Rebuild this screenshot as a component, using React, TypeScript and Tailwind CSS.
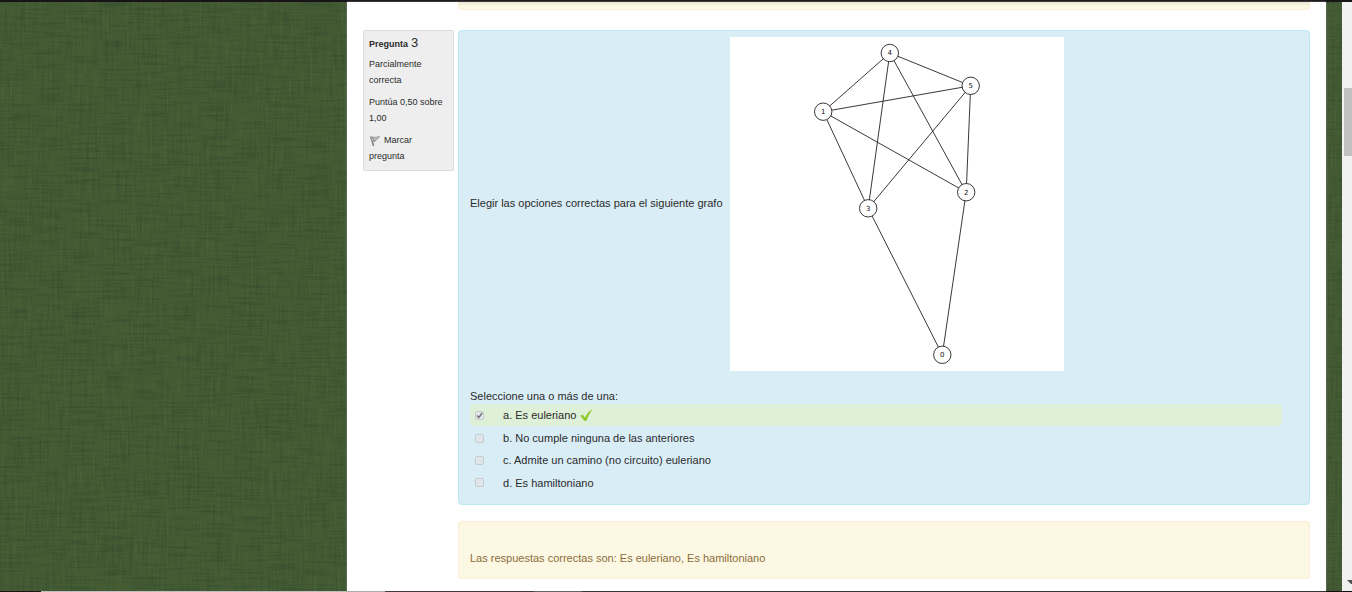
import React from "react";

const nodes = [
  { id: 0, x: 212.3, y: 317.8 },
  { id: 1, x: 93.2, y: 74.7 },
  { id: 2, x: 236.2, y: 155.2 },
  { id: 3, x: 138.2, y: 171.3 },
  { id: 4, x: 159.8, y: 16 },
  { id: 5, x: 240.7, y: 48.8 },
];

const edges = [
  [4, 1],
  [4, 5],
  [4, 3],
  [4, 2],
  [5, 1],
  [5, 3],
  [5, 2],
  [1, 2],
  [1, 3],
  [3, 0],
  [2, 0],
];

const options = [
  { key: "a", text: "Es euleriano", checked: true },
  { key: "b", text: "No cumple ninguna de las anteriores", checked: false },
  { key: "c", text: "Admite un camino (no circuito) euleriano", checked: false },
  { key: "d", text: "Es hamiltoniano", checked: false },
];

function Linen() {
  return (
    <svg className="absolute inset-0 -z-10 h-full w-full" aria-hidden="true">
      <filter id="weft" x="0" y="0" width="100%" height="100%" colorInterpolationFilters="sRGB">
        <feTurbulence type="fractalNoise" baseFrequency="0.03 0.45" numOctaves="2" seed="4" />
        <feColorMatrix values="0 0 0 0 0.14  0 0 0 0 0.22  0 0 0 0 0.16  2.4 0 0 0 -1.1" />
      </filter>
      <filter id="warp" x="0" y="0" width="100%" height="100%" colorInterpolationFilters="sRGB">
        <feTurbulence type="fractalNoise" baseFrequency="0.45 0.03" numOctaves="2" seed="9" />
        <feColorMatrix values="0 0 0 0 0.38  0 0 0 0 0.52  0 0 0 0 0.27  2.2 0 0 0 -1.05" />
      </filter>
      <filter id="shade" x="0" y="0" width="100%" height="100%" colorInterpolationFilters="sRGB">
        <feTurbulence type="fractalNoise" baseFrequency="0.4 0.03" numOctaves="2" seed="17" />
        <feColorMatrix values="0 0 0 0 0.14  0 0 0 0 0.22  0 0 0 0 0.16  2.2 0 0 0 -1.1" />
      </filter>
      <rect width="100%" height="100%" fill="#445b34" />
      <rect width="100%" height="100%" filter="url(#weft)" opacity="0.32" />
      <rect width="100%" height="100%" filter="url(#warp)" opacity="0.22" />
      <rect width="100%" height="100%" filter="url(#shade)" opacity="0.25" />
    </svg>
  );
}

function Graph() {
  return (
    <svg viewBox="0 0 334 334" className="size-[334px] shrink-0 bg-white" role="img" aria-label="Grafo">
      {edges.map(([a, b]) => (
        <line
          key={`${a}-${b}`}
          x1={nodes[a].x}
          y1={nodes[a].y}
          x2={nodes[b].x}
          y2={nodes[b].y}
          stroke="#222"
          strokeWidth="0.9"
        />
      ))}
      {nodes.map((n) => (
        <g key={n.id}>
          <circle cx={n.x} cy={n.y} r="8.7" fill="#fff" stroke="#222" strokeWidth="0.9" />
          <text x={n.x} y={n.y + 2.4} textAnchor="middle" fill="#111" className="font-['DejaVu_Sans',sans-serif] text-[7px]">
            {n.id}
          </text>
        </g>
      ))}
    </svg>
  );
}

function QuestionInfo() {
  return (
    <aside className="flex w-[91px] shrink-0 flex-col gap-1.5 self-start rounded-xs border border-[#dcdcdc] bg-[#eee] px-[5px] pt-[5px] pb-1.5 text-[9px] leading-4">
      <div>
        <h3 className="mb-1 flex h-4 items-baseline gap-[3px] font-bold leading-[14px]">
          Pregunta <span className="text-[13px] font-normal">3</span>
        </h3>
        <p>Parcialmente correcta</p>
      </div>
      <p>Puntúa 0,50 sobre 1,00</p>
      <a href="#marcar">
        <svg viewBox="0 0 12 12" className="mr-[3px] inline size-3 align-middle" aria-hidden="true">
          <path d="M1.8 1.8 4.6 11" fill="none" stroke="#777" strokeWidth="1.4" />
          <path d="M1.6 1.8 5.5 2.4 10.6 1.7 8 4.4 5 6.6 3.2 6.8Z" fill="#c8c8c8" stroke="#888" strokeWidth="0.8" />
          <path d="M3.8 2.6 5.4 6.2 6.6 5.2" fill="none" stroke="#777" strokeWidth="0.9" />
        </svg>
        Marcar pregunta
      </a>
    </aside>
  );
}

export default function App() {
  return (
    <div className="flex h-screen flex-col overflow-hidden font-['Liberation_Sans',Arial,sans-serif] text-[#2b2b2b]">
      <div className="h-0.5 shrink-0 bg-[#171316]" />
      <div className="flex min-h-0 flex-1">
        <div className="relative isolate flex min-w-0 flex-1 pr-4 pl-[347px]">
          <Linen />
          <main className="min-w-0 flex-1 bg-white px-4 shadow-[0_0_2px_#888]">
            <div className="ml-[95px] h-2 rounded-b border border-t-0 border-[#fbeed5] bg-gradient-to-b from-[#ece5d5] to-[#fcf8e3] to-60%" />
            <section className="mt-5 flex items-start gap-1">
              <QuestionInfo />
              <div className="flex min-w-0 flex-1 flex-col gap-4 text-[11px] leading-[18px]">
                <div className="rounded-sm border border-[#bce8f1] bg-[#d9edf7] px-[11px] pt-1.5 pb-2.5">
                  <div className="flex items-center gap-[3px]">
                    <p className="min-w-[257px] pb-0.5 whitespace-nowrap">
                      Elegir las opciones correctas para el siguiente grafo
                    </p>
                    <Graph />
                  </div>
                  <fieldset className="mt-4">
                    <legend className="pt-px leading-4">Seleccione una o más de una:</legend>
                    <div className="mr-4 flex flex-col">
                      {options.map((o) => (
                        <div
                          key={o.key}
                          className={
                            o.checked
                              ? "mb-px flex h-[22px] items-center rounded-sm bg-[#dff0d8] pl-[5px]"
                              : "flex h-[22px] items-center pl-[5px] last:h-[23px]"
                          }
                        >
                          <span className="mr-[19px] grid size-[9px]">
                            <input
                              id={`opcion-${o.key}`}
                              type="checkbox"
                              disabled
                              defaultChecked={o.checked}
                              className="col-start-1 row-start-1 size-[9px] appearance-none rounded-[2px] border border-[#c6cdd0] bg-[#dfe5e8]"
                            />
                            {o.checked && (
                              <svg viewBox="0 0 9 9" className="col-start-1 row-start-1 size-[9px]" aria-hidden="true">
                                <path d="M2 4.6 3.8 6.6 7.2 2" fill="none" stroke="#777" strokeWidth="1.5" />
                              </svg>
                            )}
                          </span>
                          <label htmlFor={`opcion-${o.key}`}>
                            {o.key}. {o.text}
                          </label>
                          {o.checked && (
                            <svg viewBox="0 0 13 13" className="ml-1 size-[13px]" role="img" aria-label="Correcta">
                              <path d="M0.3 6.8 2.8 5.8 5 8.6C6.5 5.4 9 2 12.8 0.3 9.8 4 8 7.6 6.4 11.8L4.4 12Z" fill="#8fc92a" />
                            </svg>
                          )}
                        </div>
                      ))}
                    </div>
                  </fieldset>
                </div>
                <div className="rounded-sm border border-[#fbeed5] bg-[#fcf8e3] px-[11px] pt-[27px] pb-[11px] text-[#8a6d3b]">
                  Las respuestas correctas son: Es euleriano, Es hamiltoniano
                </div>
              </div>
            </section>
          </main>
        </div>
        <div className="flex w-[10px] shrink-0 flex-col items-end justify-between bg-[#f1f1f1] pt-[86px] pb-[7px]" aria-hidden="true">
          <div className="h-[68px] w-2 bg-[#c1c1c1]" />
          <svg viewBox="0 0 5 4" className="h-1 w-[5px]">
            <path d="M0 0H5V4H4Z" fill="#505050" />
          </svg>
        </div>
      </div>
      <div className="flex h-px shrink-0 bg-[#100c0e]">
        <div className="w-[41px] bg-[#1c1512]" />
        <div className="w-[344px] bg-[#bdbdbd]" />
        <div className="w-[149px] bg-[#2a1716]" />
        <div className="w-12 bg-[#5a5050]" />
      </div>
    </div>
  );
}
